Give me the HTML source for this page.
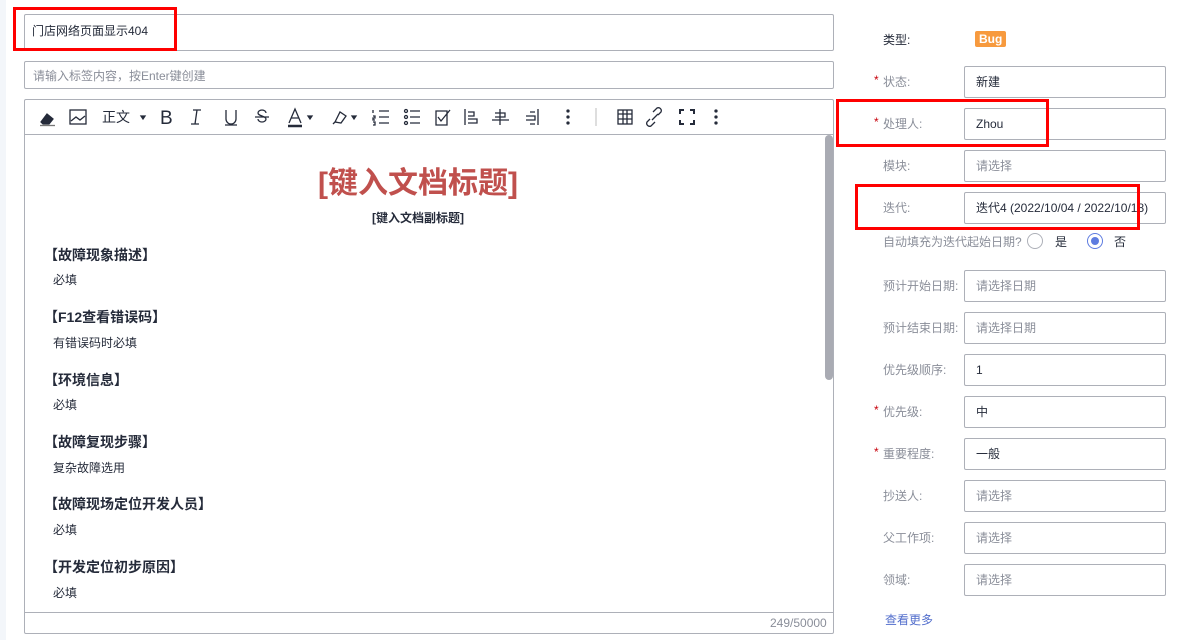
<!DOCTYPE html>
<html><head><meta charset="utf-8"><style>
*{box-sizing:border-box;margin:0;padding:0}
body{width:1181px;height:640px;background:#fff;font-family:"Liberation Sans","Noto Sans CJK SC",sans-serif;position:relative;overflow:hidden;color:#252b3a}
.a{position:absolute}
.box{position:absolute;border:1px solid #adb0b8;border-radius:2px;background:#fff}
.red{position:absolute;border:3px solid #f00}
.lbl{position:absolute;left:883px;font-size:12px;color:#8a8e99}
.star{position:absolute;left:874px;color:#c7000b;font-size:12px}
.inp{position:absolute;left:964px;width:202px;height:32px;border:1px solid #adb0b8;border-radius:2px;font-size:12px;line-height:30px;padding-left:11px}
.ph{color:#8a8e99}
.h{position:absolute;left:44px;font-size:14px;font-weight:bold;color:#252b3a}
.t{position:absolute;left:53px;font-size:12px;color:#252b3a}
.ic{position:absolute;top:108px}
</style></head><body>
<div class="a" style="left:0;top:0;width:6px;height:640px;background:#f3f6fa"></div>
<div class="box" style="left:24px;top:14px;width:810px;height:37px"></div>
<div class="a" style="left:32px;top:23px;font-size:12px;line-height:16px">门店网络页面显示404</div>
<div class="red" style="left:13px;top:7px;width:164px;height:44px"></div>
<div class="box" style="left:24px;top:61px;width:810px;height:28px"></div>
<div class="a" style="left:33px;top:67px;font-size:12px;color:#8a8e99">请输入标签内容，按Enter键创建</div>
<div class="box" style="left:24px;top:99px;width:810px;height:535px"></div>
<div class="a" style="left:25px;top:134px;width:808px;height:1px;background:#adb0b8"></div>
<div class="a" style="left:25px;top:612px;width:808px;height:1px;background:#adb0b8"></div>
<div class="a" style="left:770px;top:616px;font-size:12px;color:#8a8e99">249/50000</div>
<div class="a" style="left:825px;top:135px;width:8px;height:245px;background:#a9abb3;border-radius:4px"></div>
<svg class="a" style="left:30px;top:104px" width="710" height="26" fill="none" stroke="#252b3a" stroke-width="1.3">
<path d="M11 18 L17 10 L23 15 L19 20 L13 20 Z" fill="#252b3a"/><line x1="10" y1="21.5" x2="25" y2="21.5" stroke="#777"/>
<rect x="40" y="6" width="16" height="14"/><path d="M41 17 L46 13 L50 16 L55 12"/>
<text x="72" y="18" font-size="14" fill="#252b3a" stroke="none" font-family="Noto Sans CJK SC">正文</text><path d="M111 12 L115 12 L113 15Z" fill="#252b3a"/>
<text x="130" y="20" font-size="19" fill="#252b3a" stroke="none" font-family="Liberation Sans">B</text>
<path d="M163 6 L171 6 M167 6 L165 20 M161 20 L169 20"/>
<path d="M196 6 V15 a5 5 0 0 0 10 0 V6 M195 21 H207"/>
<path d="M236 9 a4 3 0 0 0 -8 0 c0 3 8 3 8 6 a4 3 0 0 1 -8 0 M225 13 H239"/>
<path d="M259 19 L265 5 L271 19 M261 14 H269"/><line x1="258" y1="22" x2="272" y2="22" stroke-width="2.5"/><path d="M278 12 L282 12 L280 15Z" fill="#252b3a"/>
<path d="M305 18 L310 8 L316 12 L311 19 Z M303 20 L306 17"/><path d="M322 12 L326 12 L324 15Z" fill="#252b3a"/>
<path d="M349 7 H359 M349 13 H359 M349 19 H359 M343 6 V9 M343 12 H345 V14 H343 V16 H345 M343 18 H345 V21 H343"/>
<path d="M380 7 H390 M380 13 H390 M380 19 H390"/><circle cx="376" cy="7" r="1.5"/><circle cx="376" cy="13" r="1.5"/><circle cx="376" cy="19" r="1.5"/>
<path d="M406 7 H417 V21 H406 Z M408 13 L411 17 L420 6"/>
<path d="M435 5 V21 M438 8 H444 V12 H438 M438 15 H447 V19 H438"/>
<path d="M470 5 V21 M465 9 H475 V13 H465 M462 16 H479"/>
<path d="M508 5 V21 M500 8 H505 M496 12 H505 V16 H496 M500 20 H505"/>
<circle cx="538" cy="7" r="1" fill="#252b3a"/><circle cx="538" cy="13" r="1" fill="#252b3a"/><circle cx="538" cy="19" r="1" fill="#252b3a"/>
<line x1="566" y1="4" x2="566" y2="22" stroke="#ccc"/>
<rect x="588" y="6" width="14" height="14"/><path d="M588 10 H602 M588 15 H602 M593 6 V20 M597 6 V20"/>
<path d="M620 15 L617 18 a3 3 0 0 0 4 4 L625 18 M628 11 L631 8 a3 3 0 0 0 -4 -4 L623 8 M622 16 L628 10"/>
<path d="M650 10 V6 H654 M660 6 H664 V10 M664 16 V20 H660 M654 20 H650 V16" stroke-width="2"/>
<circle cx="686" cy="7" r="1" fill="#252b3a"/><circle cx="686" cy="13" r="1" fill="#252b3a"/><circle cx="686" cy="19" r="1" fill="#252b3a"/>
</svg>
<div class="a" style="left:0;width:836px;top:164px;text-align:center;font-size:30px;font-weight:bold;color:#c0504d;line-height:40px">[键入文档标题]</div>
<div class="a" style="left:0;width:836px;top:209px;text-align:center;font-size:12px;font-weight:bold">[键入文档副标题]</div>
<div class="h" style="top:245px">【故障现象描述】</div><div class="t" style="top:271px">必填</div>
<div class="h" style="top:307px">【F12查看错误码】</div><div class="t" style="top:334px">有错误码时必填</div>
<div class="h" style="top:370px">【环境信息】</div><div class="t" style="top:396px">必填</div>
<div class="h" style="top:432px">【故障复现步骤】</div><div class="t" style="top:459px">复杂故障选用</div>
<div class="h" style="top:494px">【故障现场定位开发人员】</div><div class="t" style="top:521px">必填</div>
<div class="h" style="top:557px">【开发定位初步原因】</div><div class="t" style="top:584px">必填</div>

<div class="lbl" style="top:31px;color:#252b3a">类型:</div>
<div class="a" style="left:975px;top:31px;background:#f79a3e;color:#fff;font-size:12px;font-weight:bold;padding:0 4px;line-height:16px;border-radius:2px">Bug</div>
<div class="star" style="top:73px">*</div><div class="lbl" style="top:73px">状态:</div><div class="inp" style="top:66px">新建</div>
<div class="star" style="top:115px">*</div><div class="lbl" style="top:115px">处理人:</div><div class="inp" style="top:108px">Zhou</div>
<div class="lbl" style="top:157px">模块:</div><div class="inp ph" style="top:150px">请选择</div>
<div class="lbl" style="top:199px">迭代:</div><div class="inp" style="top:192px">迭代4 (2022/10/04 / 2022/10/18)</div>
<div class="lbl" style="top:233px">自动填充为迭代起始日期?</div>
<div class="a" style="left:1027px;top:233px;width:16px;height:16px;border:1px solid #adb0b8;border-radius:50%"></div>
<div class="a" style="left:1055px;top:233px;font-size:12px">是</div>
<div class="a" style="left:1087px;top:233px;width:16px;height:16px;border:1px solid #5e7ce0;border-radius:50%"><div style="margin:3px;width:8px;height:8px;border-radius:50%;background:#5e7ce0"></div></div>
<div class="a" style="left:1114px;top:233px;font-size:12px">否</div>
<div class="lbl" style="top:277px">预计开始日期:</div><div class="inp ph" style="top:270px">请选择日期</div>
<div class="lbl" style="top:319px">预计结束日期:</div><div class="inp ph" style="top:312px">请选择日期</div>
<div class="lbl" style="top:361px">优先级顺序:</div><div class="inp" style="top:354px">1</div>
<div class="star" style="top:403px">*</div><div class="lbl" style="top:403px">优先级:</div><div class="inp" style="top:396px">中</div>
<div class="star" style="top:445px">*</div><div class="lbl" style="top:445px">重要程度:</div><div class="inp" style="top:438px">一般</div>
<div class="lbl" style="top:487px">抄送人:</div><div class="inp ph" style="top:480px">请选择</div>
<div class="lbl" style="top:529px">父工作项:</div><div class="inp ph" style="top:522px">请选择</div>
<div class="lbl" style="top:571px">领域:</div><div class="inp ph" style="top:564px">请选择</div>
<div class="a" style="left:885px;top:611px;font-size:12px;color:#526ecc">查看更多</div>

<div class="red" style="left:836px;top:99px;width:213px;height:48px"></div>
<div class="red" style="left:855px;top:184px;width:285px;height:46px"></div>
</body></html>
